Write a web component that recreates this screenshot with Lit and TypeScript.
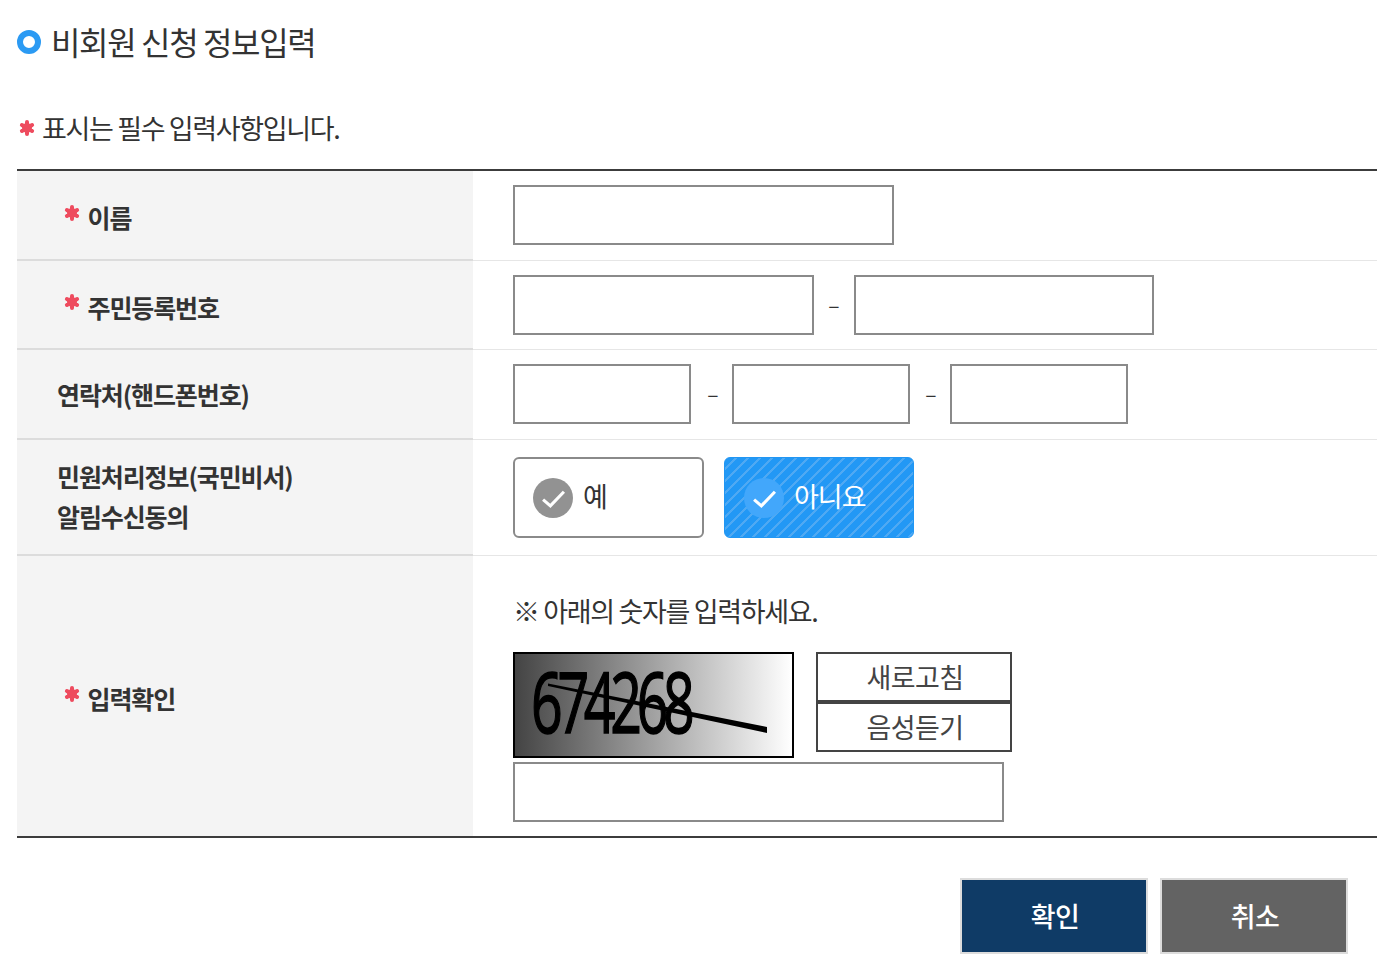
import { LitElement, html, css, svg } from "lit";
import { customElement } from "lit/decorators.js";

const star = svg`<svg class="star" viewBox="0 0 16 16" width="16" height="16"><circle cx="8" cy="8" r="5" fill="#ee4b5e"/><g stroke="#ee4b5e" stroke-width="4" stroke-linecap="round"><path d="M8 2.100v11.800M2.900 5l10.200 6M2.900 11l10.200-6"/></g></svg>`;
const check = svg`<svg viewBox="0 0 24 24" width="24" height="24"><path d="M2 14l7 6L22 6.500" fill="none" stroke="#fff" stroke-width="3"/></svg>`;

@customElement("app-root")
export class AppRoot extends LitElement {
  static styles = css`
    :host { display: block; width: 1378px; height: 966px; overflow: hidden; background: #fff; color: #333;
      font-family: "Noto Sans CJK KR", "Noto Sans", sans-serif; }
    * { box-sizing: border-box; }
    .page { padding: 0 1px 0 17px; }
    .title { display: flex; align-items: center; gap: 10px; height: 84px; padding-bottom: 1px; font-size: 32px; font-weight: 400; letter-spacing: -1.360px; color: #333; margin: 0; }
    .ttx { margin-top: -2px; }
    .ring { width: 24px; height: 24px; border-radius: 50%; border: 6.500px solid #2b9af3; }
    .note { display: flex; align-items: center; gap: 7px; height: 85px; font-size: 27px; letter-spacing: -1.350px; padding: 2px 0 0 2px; margin: 0; }
    .star { flex: none; filter: blur(.3px); }
    .table { border-top: 2px solid #3c3c3c; border-bottom: 2px solid #3c3c3c; }
    .row { display: grid; grid-template-columns: 456px 1fr; border-bottom: 1px solid #e6e6e6; }
    .row:last-child { border-bottom: 0; }
    .h { background: #f4f4f4; border-bottom: 2px solid #dcdcdc; margin-bottom: -1px; display: flex; align-items: center; padding-left: 40px; font-size: 25px; font-weight: 700; letter-spacing: -1.100px; line-height: 40px; color: #333; }
    .row:last-child .h { border-bottom: 0; margin-bottom: 0; }
    .h.req { padding: 4px 0 0 47px; gap: 7.500px; }
    .h.req .star { margin-top: -9px; }
    .r4 .h { padding-bottom: 3px; }
    .d { padding-left: 40px; display: flex; align-items: center; }
    .r1 { height: 90px; } .r2 { height: 89px; } .r3 { height: 90px; } .r4 { height: 116px; } .r5 { height: 280px; }
    .r1 .d { padding-bottom: 2px; }
    .r2 .d { padding-bottom: 1px; }
    .r3 .d { padding-bottom: 1px; }
    .inp { display: block; height: 60px; border: 2px solid #8a8a8a; background: #fff; margin: 0; padding: 0; }
    .w380 { width: 381px; } .w300 { width: 301px; } .w300b { width: 300px; } .w178 { width: 178px; } .w490 { width: 491px; }
    .dash { width: 40px; text-align: center; font-size: 21px; line-height: 30px; color: #333; padding-bottom: 2px; }
    .dash.s { width: 41px; padding-left: 3px; }
    .dash.t { width: 40px; padding-left: 2px; }
    .choice { display: flex; gap: 20px; }
    .opt { width: 191px; height: 81px; border-radius: 6px; border: 2px solid #8a8a8a; background: #fff; display: flex; align-items: center; padding-left: 18px; gap: 10px; font-size: 27px; color: #333; letter-spacing: -1px; }
    .opt .tx { margin-top: -5px; }
    .opt.on { width: 190px; border: 1px solid #2196f3; color: #fff; padding-left: 19px;
      background: repeating-linear-gradient(135deg, #2298f5 0 6.500px, #4fa9f3 6.500px 8.500px); }
    .dot { width: 40px; height: 40px; border-radius: 50%; background: #929292; display: flex; align-items: center; justify-content: center; }
    .on .dot { background: #42a7fb; }
    .dot svg { width: 25px; height: 25px; }
    .cap { display: block; padding-top: 35px; }
    .capnote { font-size: 27px; letter-spacing: -1.350px; line-height: 40px; color: #333; margin: 0 0 21px; }
    .caprow { display: flex; gap: 22px; align-items: flex-start; margin-bottom: 4px; }
    .img { position: relative; width: 281px; height: 106px; border: 2px solid #000; display: block;
      background: linear-gradient(90deg, #444, #fff); }
    .digits { position: absolute; left: 16px; top: 1.500px; font-family: "Open Sans", sans-serif; font-size: 84px; line-height: 90px; letter-spacing: -8px; color: #000; transform: scaleX(.66); transform-origin: left center; -webkit-text-stroke: 1.600px #000; filter: blur(.5px); }
    .img svg { position: absolute; left: 0; top: 0; filter: blur(.4px); }
    .btns { display: flex; flex-direction: column; width: 196px; }
    .btn { height: 50px; border: 2px solid #444; background: #fff; font: inherit; font-size: 27px; letter-spacing: -0.6px; color: #444; display: flex; align-items: center; justify-content: center; padding: 0 0 2px 2px; }
    .foot { display: flex; justify-content: flex-end; gap: 12px; padding: 40px 29px 0 0; }
    .act { width: 188px; height: 76px; border: 2px solid #dcdcdc; color: #fff; font-size: 27px; letter-spacing: -0.5px; display: flex; align-items: center; justify-content: center; padding: 0 0 2px 2px; font-weight: 500; }
    .ok { background: #0f3b66; }
    .no { background: #636363; }
  `;

  render() {
    return html`<div class="page">
      <h1 class="title"><span class="ring"></span><span class="ttx">비회원 신청 정보입력</span></h1>
      <p class="note">${star}표시는 필수 입력사항입니다.</p>
      <div class="table">
        <div class="row r1"><div class="h req">${star}이름</div><div class="d"><div class="inp w380"></div></div></div>
        <div class="row r2"><div class="h req">${star}주민등록번호</div><div class="d"><div class="inp w300"></div><span class="dash">–</span><div class="inp w300b"></div></div></div>
        <div class="row r3"><div class="h">연락처(핸드폰번호)</div><div class="d"><div class="inp w178"></div><span class="dash s">–</span><div class="inp w178"></div><span class="dash t">–</span><div class="inp w178"></div></div></div>
        <div class="row r4"><div class="h">민원처리정보(국민비서)<br />알림수신동의</div><div class="d"><div class="choice">
          <div class="opt"><span class="dot">${check}</span><span class="tx">예</span></div>
          <div class="opt on"><span class="dot">${check}</span><span class="tx">아니요</span></div>
        </div></div></div>
        <div class="row r5"><div class="h req">${star}입력확인</div><div class="d cap">
          <p class="capnote">※ 아래의 숫자를 입력하세요.</p>
          <div class="caprow">
            <div class="img"><span class="digits">674268</span>
              <svg width="277" height="102" viewBox="0 0 277 102"><path d="M33 29.500L252 73L252 79L33 32Z" fill="#000"/></svg></div>
            <div class="btns"><div class="btn">새로고침</div><div class="btn">음성듣기</div></div>
          </div>
          <div class="inp w490"></div>
        </div></div>
      </div>
      <div class="foot"><div class="act ok">확인</div><div class="act no">취소</div></div>
    </div>`;
  }
}
